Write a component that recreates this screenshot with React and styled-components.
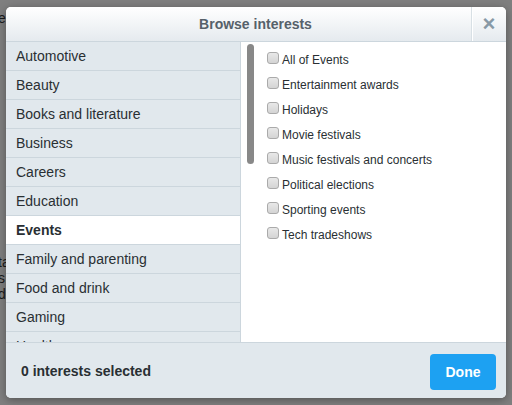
import React from 'react';
import styled, { createGlobalStyle } from 'styled-components';

const categories = [
  'Automotive', 'Beauty', 'Books and literature', 'Business', 'Careers',
  'Education', 'Events', 'Family and parenting', 'Food and drink', 'Gaming', 'Health',
];

const interests = [
  'All of Events', 'Entertainment awards', 'Holidays', 'Movie festivals',
  'Music festivals and concerts', 'Political elections', 'Sporting events', 'Tech tradeshows',
];

export default function App() {
  return (
    <>
      <Global />
      <Backdrop>
        <PageText top={10}>e</PageText>
        <PageText top={254}>ta</PageText>
        <PageText top={270}>s</PageText>
        <PageText top={286}>de</PageText>
      </Backdrop>
      <Modal>
        <Header>
          <Title>Browse interests</Title>
          <Close>×</Close>
        </Header>
        <Body>
          <Categories>
            {categories.map((c) => (
              <Category key={c} active={c === 'Events'}>{c}</Category>
            ))}
          </Categories>
          <Interests>
            <Scrollbar />
            {interests.map((i) => (
              <Item key={i}>
                <Box />
                {i}
              </Item>
            ))}
          </Interests>
        </Body>
        <Footer>
          <Count>0 interests selected</Count>
          <Done>Done</Done>
        </Footer>
      </Modal>
    </>
  );
}

const Global = createGlobalStyle`
  body {
    margin: 0;
    background: #7f7f7f;
    font-family: "Liberation Sans", Arial, sans-serif;
    overflow: hidden;
  }
`;

const Backdrop = styled.div`
  position: fixed;
  inset: 0;
  background: #7f7f7f;
`;

const PageText = styled.span`
  position: absolute;
  left: -2px;
  top: ${(p) => p.top}px;
  font-size: 14px;
  color: #1a1a1a;
`;

const Modal = styled.div`
  position: fixed;
  left: 6px;
  top: 7px;
  width: 500px;
  height: 391px;
  display: flex;
  flex-direction: column;
  background: #fff;
  border-radius: 5px;
  overflow: hidden;
  box-shadow: 0 2px 8px rgba(0, 0, 0, 0.35);
`;

const Header = styled.div`
  height: 34px;
  flex: none;
  display: flex;
  align-items: center;
  border-bottom: 1px solid #ccd6dd;
  background: linear-gradient(#ffffff, #e5eaee);
`;

const Title = styled.h3`
  flex: 1;
  margin: 0;
  text-align: center;
  font-size: 14px;
  font-weight: bold;
  color: #56616a;
  padding-left: 34px;
`;

const Close = styled.div`
  width: 34px;
  height: 34px;
  flex: none;
  display: flex;
  align-items: center;
  justify-content: center;
  border-left: 1px solid #d8e0e5;
  box-shadow: inset 1px 0 0 #fff;
  font-size: 22px;
  font-weight: bold;
  color: #8899a6;
`;

const Body = styled.div`
  height: 300px;
  flex: none;
  display: flex;
`;

const Categories = styled.ul`
  width: 234px;
  flex: none;
  margin: 0;
  padding: 0;
  list-style: none;
  overflow: hidden;
  background: #e1e8ed;
  border-right: 1px solid #ccd6dd;
`;

const Category = styled.li`
  height: 28px;
  line-height: 28px;
  padding-left: 10px;
  font-size: 14px;
  color: #292f33;
  border-bottom: 1px solid #ccd6dd;
  background: ${(p) => (p.active ? '#fff' : 'transparent')};
  font-weight: ${(p) => (p.active ? 'bold' : 'normal')};
`;

const Interests = styled.div`
  position: relative;
  flex: 1;
  padding: 5px 0 0 26px;
`;

const Scrollbar = styled.div`
  position: absolute;
  left: 6px;
  top: 2px;
  width: 7px;
  height: 120px;
  border-radius: 4px;
  background: #888;
`;

const Item = styled.div`
  height: 25px;
  display: flex;
  align-items: center;
  font-size: 12px;
  color: #292f33;
`;

const Box = styled.span`
  width: 10px;
  height: 10px;
  margin: -3px 3px 0 0;
  border: 1px solid #aaa;
  border-radius: 3px;
  background: linear-gradient(#e8e8e8, #d4d4d4);
`;

const Footer = styled.div`
  flex: 1;
  display: flex;
  align-items: center;
  justify-content: space-between;
  padding: 0 10px 0 15px;
  background: #e1e8ed;
  border-top: 1px solid #ccd6dd;
`;

const Count = styled.span`
  font-size: 14px;
  font-weight: bold;
  color: #292f33;
`;

const Done = styled.button`
  width: 66px;
  height: 36px;
  margin-top: 2px;
  border: none;
  border-radius: 4px;
  background: #1da1f2;
  color: #fff;
  font-family: inherit;
  font-size: 14px;
  font-weight: bold;
`;
